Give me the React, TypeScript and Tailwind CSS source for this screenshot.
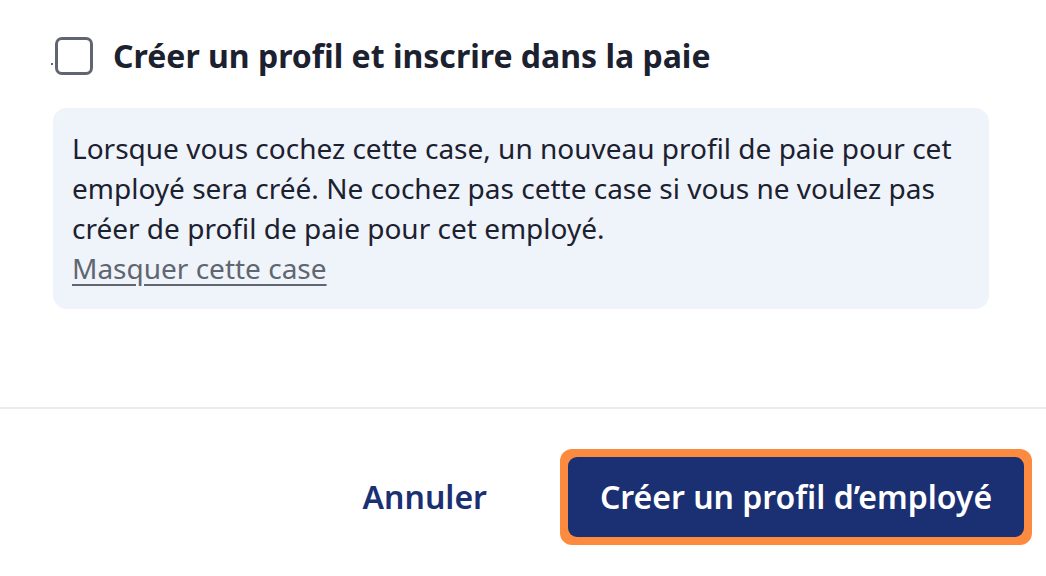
export default function App() {
  return (
    <div className="w-[1046px] h-[576px] bg-white flex flex-col" style={{ fontFamily: '"Noto Sans", "Open Sans", sans-serif' }}>
      <div className="px-[53px] pt-[37px]">
        {/* checkbox row */}
        <label className="flex items-center gap-[20px] relative">
          <span className="absolute left-[-2px] top-[26px] w-[2px] h-[2px] bg-[#5f6670]" />
          <span className="ml-[2px] w-[38px] h-[38px] rounded-[7px] border-[3px] border-[#5f6670] bg-white shrink-0" />
          <span className="text-[32px] leading-[38px] font-bold text-[#1c2130]">Créer un profil et inscrire dans la paie</span>
        </label>

        <div className="mt-[33px] w-[936px] h-[201px] rounded-[14px] bg-[#eff3fa] px-[19px] pt-[20px] text-[28px] leading-[40px] text-[#1c2130]">
          <p>
            Lorsque vous cochez cette case, un nouveau profil de paie pour cet employé sera créé. Ne cochez pas cette case si vous ne voulez pas créer de profil de paie pour cet employé.
          </p>
          <a href="#" className="text-[#5f6670] underline underline-offset-[5px]">Masquer cette case</a>
        </div>
      </div>

      <div className="mt-[98px] h-[2px] bg-[#ececec]" />

      <div className="flex items-center justify-end pr-[14px] pt-[40px] gap-[73px]">
        <button className="text-[32px] font-semibold text-[#1b2f73]">Annuler</button>
        <div className="rounded-[12px] bg-[#fd8b3f] p-[8px]">
          <button className="h-[80px] w-[456px] rounded-[9px] bg-[#1b2f73] text-white text-[32px] font-semibold">
            Créer un profil d’employé
          </button>
        </div>
      </div>
    </div>
  );
}
